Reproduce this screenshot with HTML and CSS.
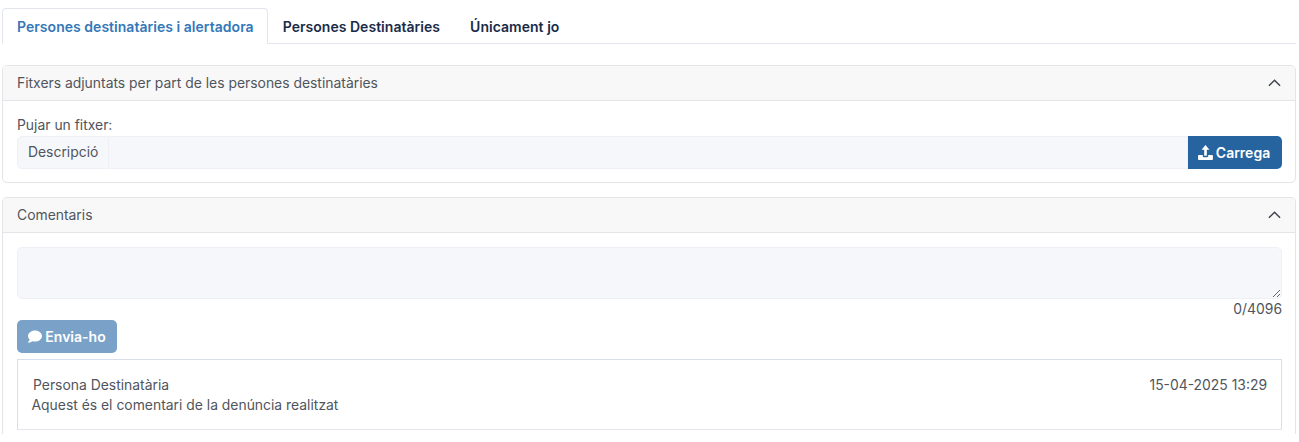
FILE: index.html
```html
<!DOCTYPE html>
<html lang="ca">
<head>
<meta charset="utf-8">
<title>Persones destinatàries</title>
<link rel="stylesheet" href="styles.css">
</head>
<body>
<div class="tabs">
  <a class="tab active">Persones destinatàries i alertadora</a>
  <a class="tab">Persones Destinatàries</a>
  <a class="tab">Únicament jo</a>
</div>
<section class="card first">
  <header class="card-head">
    <span>Fitxers adjuntats per part de les persones destinatàries</span>
    <svg class="chev" viewBox="0 0 14 8"><path d="M1 7l6-6 6 6"/></svg>
  </header>
  <div class="card-body upload">
    <label class="lbl">Pujar un fitxer:</label>
    <div class="group">
      <span class="addon">Descripció</span>
      <span class="field"></span>
      <button class="btn primary">
        <svg class="ico up" viewBox="0 0 16 16"><path d="M8 0l4.200 5H9.400v6.500H6.600V5H3.800z"/><path d="M1.200 10.600h3.900v1.400c0 .6.5 1 1.100 1h3.600c.6 0 1.100-.4 1.100-1v-1.400h3.900c.6 0 1.100.5 1.100 1.100v3.100c0 .6-.5 1.200-1.100 1.200H1.200c-.6 0-1.200-.6-1.200-1.200v-3.100c0-.6.6-1.100 1.200-1.100z"/></svg>
        Carrega
      </button>
    </div>
  </div>
</section>
<section class="card last">
  <header class="card-head">
    <span>Comentaris</span>
    <svg class="chev" viewBox="0 0 14 8"><path d="M1 7l6-6 6 6"/></svg>
  </header>
  <div class="card-body comments">
    <textarea class="area"></textarea>
    <div class="count">0/4096</div>
    <button class="btn send">
      <svg class="ico" viewBox="0 0 16 14"><path d="M8 0c4.400 0 8 2.900 8 6.400s-3.600 6.400-8 6.400c-1.100 0-2.200-.2-3.100-.5C3.900 13.100 2.300 14 .4 14c-.2 0-.4-.1-.4-.3s0-.3.100-.4c.9-.9 1.600-2.100 1.800-3C.7 9.200 0 7.900 0 6.400 0 2.900 3.600 0 8 0z"/></svg>
      Envia-ho
    </button>
    <article class="comment">
      <div class="comment-top"><span class="author">Persona Destinatària</span><span>15-04-2025 13:29</span></div>
      <p class="comment-text">Aquest és el comentari de la denúncia realitzat</p>
    </article>
  </div>
</section>
</body>
</html>
```
FILE: styles.css
```css
* { box-sizing: border-box; }
html, body { margin: 0; height: 442px; overflow: hidden; background: #fff; }
body {
  padding: 8px 3px 0 2px;
  font-family: Inter, "Liberation Sans", sans-serif;
  font-size: 13.900px;
  line-height: 20px;
  color: #50555d;
}
.tabs { display: flex; height: 36px; border-bottom: 1px solid #e3e6ee; }
.tab {
  height: 36px;
  padding: 0 14px;
  line-height: 36px;
  font-size: 14px;
  letter-spacing: .03px;
  font-weight: 600;
  color: #1a2b47;
  border: 1px solid transparent;
  border-radius: 4px 4px 0 0;
}
.tab.active {
  padding-right: 13px;
  color: #3478b8;
  background: #fff;
  border-color: #e3e6ee #e3e6ee #fff;
}
.card { border: 1px solid #e4e5e9; border-radius: 5px; }
.card.first { margin-top: 21px; height: 118px; }
.card.last { margin-top: 14px; height: 237px; border-bottom: 0; border-radius: 5px 5px 0 0; }
.card-head {
  display: flex;
  align-items: center;
  justify-content: space-between;
  height: 35px;
  padding: 0 14px;
  background: #f8f8f8;
  border-bottom: 1px solid #e4e5e9;
  border-radius: 4px 4px 0 0;
}
.chev { width: 13px; height: 8px; fill: none; stroke: #3f444c; stroke-width: 1.600; }
.card-body { padding: 14px 13px 0 14px; }
.lbl { display: block; height: 21px; }
.group { display: flex; height: 33px; }
.addon {
  width: 92px;
  padding-left: 10px;
  line-height: 31px;
  background: #f5f7fb;
  border: 1px solid #eef0f6;
  border-radius: 5px 0 0 5px;
}
.field { flex: 1; background: #f5f7fb; border: 1px solid #eef0f6; border-left: 0; }
.btn {
  display: flex;
  align-items: center;
  justify-content: center;
  gap: 3px;
  border: 0;
  padding: 0;
  color: #fff;
  font: 600 14px/20px Inter, "Liberation Sans", sans-serif;
}
.btn.primary { width: 94px; padding-right: 2px; background: #25649f; border-radius: 0 5px 5px 0; }
.ico { width: 14px; height: 13px; fill: #fff; }
.ico.up { width: 15px; height: 15px; }
.area {
  display: block;
  width: 100%;
  height: 52px;
  background: #f5f7fb;
  border: 1px solid #eef0f6;
  border-radius: 5px;
  margin: 0;
}
.count { height: 20px; text-align: right; }
.send { width: 100px; height: 33px; background: #7aa2c8; border-radius: 5px; margin-top: 1px; }
.comment {
  height: 71px;
  margin-top: 6px;
  padding: 15px 14px 0 13.500px;
  border: 1px solid #d9dfea;
  border-bottom-color: #e3e6ee;
}
.comment-top { display: flex; justify-content: space-between; }
.author { padding-left: 1.500px; }
.comment-text { margin: 0; }
```
